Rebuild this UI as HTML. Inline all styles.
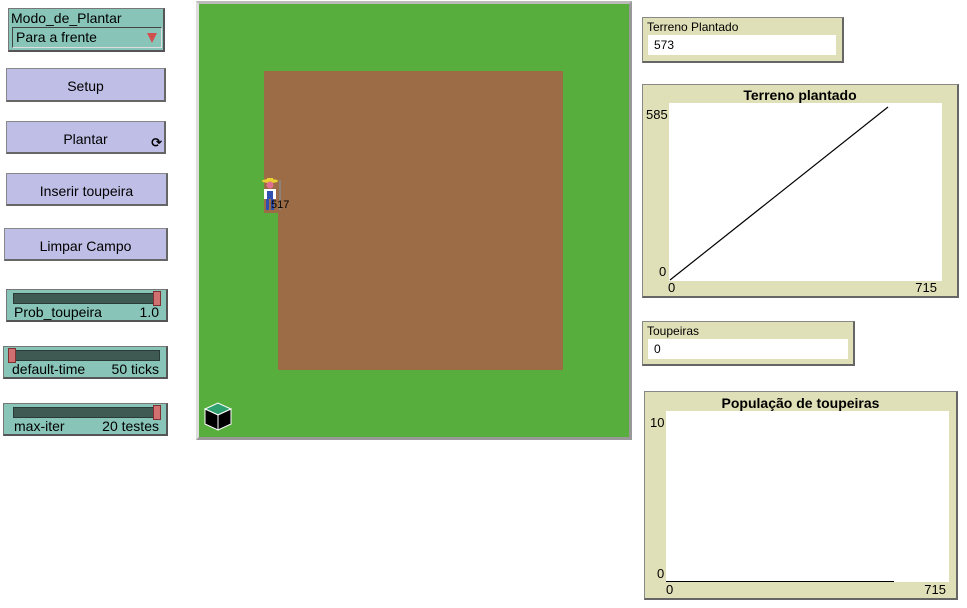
<html><head><style>
body{margin:0;width:967px;height:608px;background:#fff;position:relative;font-family:"Liberation Sans","DejaVu Sans",sans-serif;font-size:13px;overflow:hidden}
div{position:absolute;box-sizing:border-box}
.btn{background:#bebee6;border:1px solid #888;border-right:2px solid #666;border-bottom:2px solid #666;text-align:center;font-size:14px;color:#000}
.sl{background:#88c4b8;border:1px solid #777;border-right:2px solid #555;border-bottom:2px solid #555}
.tr{left:6px;right:6px;top:3px;height:11px;background:#3e5a52;border:1px solid #2a3a36}
.kn{top:1px;width:8px;height:15px;background:#d07070;border:1px solid #803030}
.lab{bottom:0px;left:7px;right:7px;font-size:14px;display:flex;justify-content:space-between}
.mon{background:#e0e0b8;border:1px solid #888;border-right:2px solid #666;border-bottom:2px solid #666;font-size:12px}
.mv{background:#fff;left:5px;top:17px;height:20px;padding:3px 6px;font-size:12px}
.ttl{font-weight:bold;font-size:14px;text-align:center;left:0;right:0}
</style></head><body>
<div style="left:8px;top:8px;width:157px;height:44px;background:#88c4b8;border:1px solid #777;border-right:2px solid #555;border-bottom:2px solid #555">
<div style="left:2px;top:1px;font-size:14px">Modo_de_Plantar</div>
<div style="left:3px;top:18px;width:150px;height:21px;background:#88c4b8;border:1px solid #444;border-right:1px solid #ddd;border-bottom:1px solid #ddd;font-size:14px;padding:1px 3px">Para a frente<span style="position:absolute;right:4px;top:5px;width:0;height:0;border-left:5px solid transparent;border-right:5px solid transparent;border-top:10px solid #d05050"></span></div></div>
<div class="btn" style="left:6px;top:68px;width:160px;height:34px;line-height:35px">Setup</div>
<div class="btn" style="left:6px;top:121px;width:160px;height:33px;line-height:35px">Plantar<span style="position:absolute;right:2px;top:14px;font-size:13px;line-height:13px;font-weight:bold">⟳</span></div>
<div class="btn" style="left:6px;top:173px;width:162px;height:33px;line-height:35px">Inserir toupeira</div>
<div class="btn" style="left:4px;top:228px;width:164px;height:33px;line-height:35px">Limpar Campo</div>
<div class="sl" style="left:6px;top:289px;width:162px;height:33px"><div class="tr"></div><div class="kn" style="right:5px"></div><div class="lab"><span>Prob_toupeira</span><span>1.0</span></div></div>
<div class="sl" style="left:3px;top:346px;width:165px;height:33px"><div class="tr"></div><div class="kn" style="left:4px"></div><div class="lab" style="left:8px"><span>default-time</span><span>50 ticks</span></div></div>
<div class="sl" style="left:3px;top:403px;width:165px;height:33px"><div class="tr" style="left:9px"></div><div class="kn" style="right:5px"></div><div class="lab" style="left:10px"><span>max-iter</span><span>20 testes</span></div></div>
<div style="left:196px;top:1px;width:436px;height:439px;background:#57ae3c;border:3px solid #bbb;border-right-color:#999;border-bottom-color:#999;border-left-color:#ddd"></div>
<div style="left:264px;top:71px;width:299px;height:142px;background:#9c6c46"></div>
<div style="left:278px;top:71px;width:285px;height:299px;background:#9c6c46"></div>
<svg style="position:absolute;left:258px;top:176px" width="32" height="36"><ellipse cx="12" cy="5" rx="8" ry="2" fill="#e8d030"/><rect x="9" y="2" width="6" height="4" fill="#e8d030"/><circle cx="12" cy="9" r="3.5" fill="#e07090"/><rect x="6" y="13" width="12" height="10" fill="#fff"/><rect x="9" y="15" width="6" height="8" fill="#3050b0"/><rect x="8" y="23" width="3" height="11" fill="#3050b0"/><rect x="13" y="23" width="3" height="11" fill="#3050b0"/><line x1="22" y1="4" x2="22" y2="34" stroke="#888" stroke-width="1.5"/></svg>
<div style="left:271px;top:199px;font-size:11px">517</div>
<svg style="position:absolute;left:203px;top:399px" width="34" height="34"><polygon points="2,10 15,4 28,10 15,16" fill="#30a070" stroke="#fff"/><polygon points="2,10 15,16 15,31 2,25" fill="#000" stroke="#fff"/><polygon points="28,10 15,16 15,31 28,25" fill="#000" stroke="#fff"/></svg>
<div class="mon" style="left:642px;top:17px;width:202px;height:46px"><div style="left:4px;top:2px">Terreno Plantado</div><div class="mv" style="width:188px">573</div></div>
<div class="mon" style="left:642px;top:84px;width:317px;height:214px"><div class="ttl" style="top:2px">Terreno plantado</div><div style="left:3px;top:22px;font-size:13px">585</div><div style="left:16px;top:179px;font-size:13px">0</div><div style="left:25px;top:195px;font-size:13px">0</div><div style="right:20px;top:195px;font-size:13px">715</div>
<div style="left:26px;top:18px;width:273px;height:178px;background:#fff"><svg width="273" height="178" style="position:absolute"><line x1="1" y1="177" x2="219" y2="4" stroke="#000" stroke-width="1.2"/></svg></div></div>
<div class="mon" style="left:642px;top:321px;width:213px;height:45px"><div style="left:4px;top:2px">Toupeiras</div><div class="mv" style="width:200px">0</div></div>
<div class="mon" style="left:644px;top:391px;width:314px;height:209px"><div class="ttl" style="top:3px">População de toupeiras</div><div style="left:5px;top:23px;font-size:13px">10</div><div style="left:12px;top:174px;font-size:13px">0</div><div style="left:21px;top:190px;font-size:13px">0</div><div style="right:10px;top:190px;font-size:13px">715</div>
<div style="left:21px;top:19px;width:283px;height:171px;background:#fff"><div style="left:0;bottom:0;width:228px;height:1px;background:#000"></div></div></div>
</body></html>
